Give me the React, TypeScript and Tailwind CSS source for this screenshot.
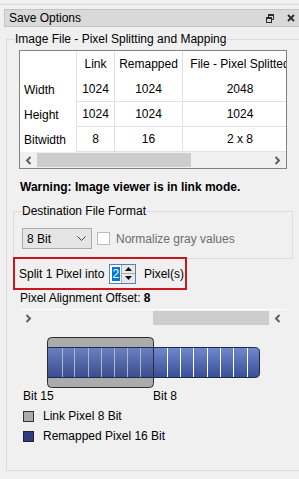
import React from "react";

const ChevL = () => (
  <svg width="7" height="9" viewBox="0 0 7 9" className="block">
    <polyline points="5.5,1 2,4.5 5.5,8" fill="none" stroke="#606060" strokeWidth="2" />
  </svg>
);
const ChevR = () => (
  <svg width="7" height="9" viewBox="0 0 7 9" className="block">
    <polyline points="1.5,1 5,4.5 1.5,8" fill="none" stroke="#606060" strokeWidth="2" />
  </svg>
);

const lineXs = [62, 74, 88, 101, 114, 127, 140, 167, 180, 193, 207, 220, 233, 247];

function BitGraphic() {
  const ox = 46;
  const oy = 335;
  return (
    <svg width="216" height="52" viewBox="0 0 216 52" className="block">
      <defs>
        <linearGradient id="blueG" x1="0" y1="0" x2="0" y2="1">
          <stop offset="0" stopColor="#7189ce" />
          <stop offset="1" stopColor="#384d95" />
        </linearGradient>
        <linearGradient id="blueL" x1="0" y1="0" x2="0" y2="1">
          <stop offset="0" stopColor="#6a80bf" />
          <stop offset="1" stopColor="#3a4d8f" />
        </linearGradient>
      </defs>
      <rect x={47 - ox + 0.5} y={336 - oy + 0.5} width={106} height={50} rx={4} fill="#ababab" />
      <path
        d={`M${47 - ox + 0.5},${346 - oy + 0.5} H${259 - ox - 4.5} Q${259 - ox + 0.5},${346 - oy + 0.5} ${259 - ox + 0.5},${346 - oy + 4.5} V${376 - oy - 3.5} Q${259 - ox + 0.5},${376 - oy + 0.5} ${259 - ox - 4.5},${376 - oy + 0.5} H${47 - ox + 0.5} Z`}
        fill="url(#blueG)"
        stroke="#1f2a52"
        strokeWidth="1"
      />
      <rect x={47 - ox + 1} y={346 - oy + 1} width={106} height={29} fill="url(#blueL)" />
      {lineXs.map((x) => (
        <line
          key={x}
          x1={x - ox + 0.5}
          x2={x - ox + 0.5}
          y1={346 - oy + 1}
          y2={376 - oy}
          stroke={x < 153 ? "#b3b6bf" : "#ffffff"}
          strokeWidth="1"
        />
      ))}
      <rect x={47 - ox + 0.5} y={336 - oy + 0.5} width={106} height={50} rx={4} fill="none" stroke="#2e2e2e" strokeWidth="1" />
      <line x1={47 - ox + 0.5} x2={153 - ox + 0.5} y1={346 - oy + 0.5} y2={346 - oy + 0.5} stroke="#1f2a52" />
      <line x1={47 - ox + 0.5} x2={153 - ox + 0.5} y1={376 - oy + 0.5} y2={376 - oy + 0.5} stroke="#1f2a52" />
    </svg>
  );
}

export default function App() {
  const rows = [
    ["Width", "1024", "1024", "2048"],
    ["Height", "1024", "1024", "1024"],
    ["Bitwidth", "8", "16", "2 x 8"],
  ];
  return (
    <div className="w-[299px] h-[479px] bg-[#f0f0f0] overflow-hidden text-[12px] leading-[14px] text-black font-['Liberation_Sans',Arial,sans-serif]">
      <div className="pt-[4px]">
        <div className="h-px bg-[#dadada]" />
      </div>
      {/* Title bar */}
      <div className="mt-[4px] ml-[4px] w-[297px] h-[18px] border border-[#c4c4c4] bg-[#d9d9d9] flex items-center">
        <span className="pl-[4px]">Save Options</span>
        <div className="ml-auto flex items-center mr-[5px]">
          <svg width="8" height="9" viewBox="0 0 8 9" className="block">
            <path d="M2.5,3 V0.5 H7.5 V5.5 H5" fill="none" stroke="#2b2b2b" strokeWidth="1" />
            <rect x="2" y="0" width="6" height="2" fill="#2b2b2b" />
            <rect x="0.5" y="3.5" width="5" height="5" fill="none" stroke="#2b2b2b" strokeWidth="1" />
            <rect x="0" y="3" width="6" height="2" fill="#2b2b2b" />
          </svg>
          <svg width="8" height="8" viewBox="0 0 8 8" className="block ml-[13px]">
            <path d="M1,1 L7,7 M7,1 L1,7" stroke="#2b2b2b" strokeWidth="1.8" />
          </svg>
        </div>
      </div>

      {/* Main group box */}
      <div className="relative mt-[12px] ml-[6px] w-[320px] h-[432px] border border-[#dcdcdc]">
        <span className="absolute -top-[8px] left-[7px] px-[1px] bg-[#f0f0f0] leading-[14px] whitespace-nowrap">
          Image File - Pixel Splitting and Mapping
        </span>
        <div className="pt-[10px] pl-[12px]">
          {/* Table */}
          <div className="w-[268px] border border-[#828282] bg-white overflow-hidden">
            <div className="flex h-[26px]">
              <div className="w-[57px] shrink-0 border-r border-[#e0e0e0]" />
              <div className="w-[38px] shrink-0 border-r border-[#e0e0e0] flex items-center justify-center">Link</div>
              <div className="w-[68px] shrink-0 border-r border-[#e0e0e0] flex items-center justify-center">Remapped</div>
              <div className="w-[114px] shrink-0 flex items-center justify-center whitespace-nowrap">File - Pixel Splitted</div>
            </div>
            {rows.map((r) => (
              <div key={r[0]} className="flex h-[25px]">
                <div className="w-[57px] shrink-0 border-r border-[#e0e0e0] flex items-center pl-[4px] pt-[1px]">{r[0]}</div>
                <div className="w-[38px] shrink-0 border-r border-b border-[#e0e0e0] flex items-center justify-center">{r[1]}</div>
                <div className="w-[68px] shrink-0 border-r border-b border-[#e0e0e0] flex items-center justify-center">{r[2]}</div>
                <div className="w-[114px] shrink-0 border-b border-[#e0e0e0] flex items-center justify-center">{r[3]}</div>
              </div>
            ))}
            <div className="h-[16px] bg-[#f0f0f0] flex items-center">
              <div className="w-[17px] flex justify-center"><ChevL /></div>
              <div className="w-[154px] h-[14px] bg-[#cdcdcd]" />
              <div className="ml-auto w-[17px] flex justify-center"><ChevR /></div>
            </div>
          </div>
        </div>

        <div className="mt-[10px] ml-[13px] font-bold leading-[16px] whitespace-nowrap">Warning: Image viewer is in link mode.</div>

        {/* Destination File Format */}
        <div className="relative mt-[16px] ml-[6px] w-[280px] h-[48px] border border-[#dcdcdc]">
          <span className="absolute -top-[8px] left-[7px] px-[1px] bg-[#f0f0f0] leading-[14px] whitespace-nowrap">Destination File Format</span>
          <div className="pt-[16px] pl-[8px] flex items-center">
            <div className="w-[70px] h-[21px] border border-[#adadad] bg-[#e5e5e5] flex items-center pl-[4px]">
              <span>8 Bit</span>
              <svg width="9" height="5" viewBox="0 0 9 5" className="block ml-auto mr-[5px]">
                <polyline points="0.5,0.5 4.5,4.5 8.5,0.5" fill="none" stroke="#404040" strokeWidth="1" />
              </svg>
            </div>
            <div className="ml-[5px] w-[13px] h-[13px] border border-[#bcbcbc] bg-white" />
            <span className="ml-[6px] text-[#6d6d6d] whitespace-nowrap">Normalize gray values</span>
          </div>
        </div>

        {/* Red highlight box */}
        <div className="relative -mt-[2px] ml-[6px] w-[174px] h-[33px] border-2 border-[#c8171e] bg-[#f0f0f0] flex items-center pl-[4px]">
          <span className="w-[90px] shrink-0 whitespace-nowrap">Split 1 Pixel into</span>
          <div className="shrink-0 w-[27px] h-[20px] border border-[#5b7fae] bg-white flex">
            <div className="w-[11px] flex items-center pl-[2px]">
              <span className="bg-[#0078d7] text-white leading-[14px] px-[0.5px]">2</span>
            </div>
            <div className="w-[14px] flex flex-col border-l border-[#adadad]">
              <div className="h-[9px] bg-[#e8e8e8] border-b border-[#adadad] flex items-center justify-center">
                <svg width="7" height="4" viewBox="0 0 7 4" className="block"><polygon points="0,4 3.5,0 7,4" fill="#111" /></svg>
              </div>
              <div className="flex-1 bg-[#e8e8e8] flex items-center justify-center">
                <svg width="7" height="4" viewBox="0 0 7 4" className="block"><polygon points="0,0 3.5,4 7,0" fill="#111" /></svg>
              </div>
            </div>
          </div>
          <span className="ml-[8px] whitespace-nowrap">Pixel(s)</span>
        </div>

        <div className="ml-[13px] leading-[16px] whitespace-nowrap">
          Pixel Alignment Offset: <span className="font-bold">8</span>
        </div>

        <div className="mt-[3px] ml-[13px] w-[266px] border-t border-white h-[17px] flex items-center">
          <div className="w-[17px] flex justify-center"><ChevR /></div>
          <div className="ml-[116px] w-[116px] h-[14px] bg-[#cdcdcd]" />
          <div className="ml-auto w-[17px] flex justify-center"><ChevL /></div>
        </div>

        <div className="mt-[10px] ml-[39px]">
          <BitGraphic />
        </div>

        <div className="flex ml-[16px] leading-[14px] mt-[1px]">
          <span className="w-[130px]">Bit 15</span>
          <span>Bit 8</span>
        </div>

        <div className="mt-[3px] ml-[16px]">
          <div className="h-[20px] flex items-center">
            <div className="w-[11px] h-[11px] border border-[#333] bg-[#ababab]" />
            <span className="ml-[9px]">Link Pixel 8 Bit</span>
          </div>
          <div className="h-[20px] flex items-center">
            <div className="w-[11px] h-[11px] border border-[#222] bg-[#2b3d80]" />
            <span className="ml-[9px]">Remapped Pixel 16 Bit</span>
          </div>
        </div>
      </div>
    </div>
  );
}
